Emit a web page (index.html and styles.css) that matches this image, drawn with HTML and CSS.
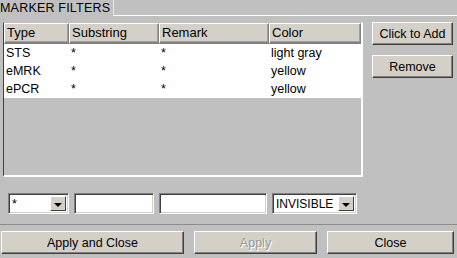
FILE: index.html
```html
<!DOCTYPE html>
<html>
<head>
<meta charset="utf-8">
<link rel="stylesheet" href="styles.css">
</head>
<body>
<div class="window">
  <div class="tabbar">
    <div class="tab">MARKER FILTERS</div>
    <div class="tab-fill"></div>
  </div>
  <div class="main">
    <div class="table">
      <div class="thead">
        <div class="th c1">Type</div>
        <div class="th c2">Substring</div>
        <div class="th c3">Remark</div>
        <div class="th c4">Color</div>
      </div>
      <div class="tr">
        <div class="td c1">STS</div><div class="td c2">*</div><div class="td c3">*</div><div class="td c4">light gray</div>
      </div>
      <div class="tr">
        <div class="td c1">eMRK</div><div class="td c2">*</div><div class="td c3">*</div><div class="td c4">yellow</div>
      </div>
      <div class="tr">
        <div class="td c1">ePCR</div><div class="td c2">*</div><div class="td c3">*</div><div class="td c4">yellow</div>
      </div>
    </div>
    <div class="side">
      <button class="btn side-btn">Click to Add</button>
      <button class="btn side-btn">Remove</button>
    </div>
  </div>
  <div class="inputs">
    <div class="combo combo-type"><span class="combo-text">*</span><span class="arrow"></span></div>
    <div class="field field-sub"></div>
    <div class="field field-rem"></div>
    <div class="combo combo-color"><span class="combo-text">INVISIBLE</span><span class="arrow"></span></div>
  </div>
  <div class="sep"></div>
  <div class="actions">
    <button class="btn act act-1">Apply and Close</button>
    <button class="btn act act-2 disabled">Apply</button>
    <button class="btn act act-3">Close</button>
  </div>
</div>
</body>
</html>
```

FILE: styles.css
```css
html, body {
  margin: 0;
  padding: 0;
  background: #c0c0c0;
}
body {
  font-family: "Liberation Sans", Arial, sans-serif;
  font-size: 12px;
  color: #000;
}
.window {
  width: 457px;
  height: 258px;
  display: flex;
  flex-direction: column;
}
.tabbar {
  display: flex;
  height: 16px;
}
.tab {
  height: 16px;
  padding-right: 3px;
  font-size: 12.5px;
  line-height: 16px;
  letter-spacing: 0.2px;
  border-right: 1px solid #e8e8e8;
  white-space: nowrap;
}
.tab-fill {
  flex: 1;
  border-bottom: 1px solid #ffffff;
  height: 15px;
}
.main {
  display: flex;
  margin-top: 6px;
  padding-left: 3px;
  gap: 9px;
  height: 155px;
}
.table {
  width: 357px;
  height: 152px;
  border-left: 1px solid #404040;
  border-top: 1px solid #c0c0c0;
  border-right: 2px solid #ffffff;
  border-bottom: 2px solid #ffffff;
  display: flex;
  flex-direction: column;
}
.thead {
  display: flex;
  height: 21px;
}
.th {
  box-sizing: border-box;
  background: #d4d0c8;
  border-top: 1px solid #ffffff;
  border-left: 1px solid #ffffff;
  border-right: 1px solid #808080;
  border-bottom: 2px solid #808080;
  box-shadow: inset -1px -1px 0 #a0a0a0;
  padding-left: 2px;
  font-size: 13px;
  line-height: 17px;
  height: 21px;
}
.c1 { width: 65px; }
.c2 { width: 90px; }
.c3 { width: 110px; }
.c4 { width: 92px; }
.tr {
  display: flex;
  height: 18px;
  background: #ffffff;
}
.td {
  box-sizing: border-box;
  padding-left: 2px;
  font-size: 12.5px;
  line-height: 18px;
}
.side {
  display: flex;
  flex-direction: column;
  gap: 10px;
  width: 81px;
}
.btn {
  font-family: "Liberation Sans", Arial, sans-serif;
  font-size: 12.5px;
  color: #000;
  background: #d4d0c8;
  border: none;
  border-top: 1px solid #ffffff;
  border-left: 1px solid #ffffff;
  border-right: 1px solid #404040;
  border-bottom: 1px solid #404040;
  box-shadow: inset -1px -1px 0 #808080;
  padding: 0;
  margin: 0;
  box-sizing: border-box;
}
.side-btn {
  height: 23px;
  width: 81px;
}
.inputs {
  display: flex;
  margin-top: 16px;
  padding-left: 8px;
  height: 21px;
}
.combo, .field {
  box-sizing: border-box;
  height: 21px;
  background: #ffffff;
  border-top: 1px solid #808080;
  border-left: 1px solid #808080;
  border-right: 1px solid #ffffff;
  border-bottom: 1px solid #ffffff;
  box-shadow: inset 1px 1px 0 #404040, inset -1px -1px 0 #d4d0c8;
}
.combo {
  display: flex;
  align-items: stretch;
  padding: 2px;
}
.combo-text {
  flex: 1;
  font-size: 12.5px;
  line-height: 16px;
  padding-left: 1px;
  white-space: nowrap;
}
.combo-color .combo-text {
  font-size: 12px;
}
.arrow {
  width: 16px;
  flex: none;
  box-sizing: border-box;
  background: #d4d0c8;
  border-top: 1px solid #ffffff;
  border-left: 1px solid #ffffff;
  border-right: 1px solid #404040;
  border-bottom: 1px solid #404040;
  position: relative;
}
.arrow::after {
  content: "";
  position: absolute;
  left: 3px;
  top: 6px;
  border-left: 4px solid transparent;
  border-right: 4px solid transparent;
  border-top: 4px solid #000;
}
.combo-type { width: 61px; }
.field-sub { width: 80px; margin-left: 5px; }
.field-rem { width: 108px; margin-left: 5px; }
.combo-color { width: 85px; margin-left: 5px; }
.sep {
  margin-top: 10px;
  height: 0;
  border-top: 1px solid #8c8c8c;
}
.actions {
  display: flex;
  margin-top: 6px;
  padding-left: 1px;
}
.act {
  height: 23px;
}
.act-1 { width: 183px; }
.act-2 { width: 123px; margin-left: 10px; }
.act-3 { width: 127px; margin-left: 10px; }
.disabled {
  color: #999999;
  text-shadow: 1px 1px 0 #ffffff;
}
```
